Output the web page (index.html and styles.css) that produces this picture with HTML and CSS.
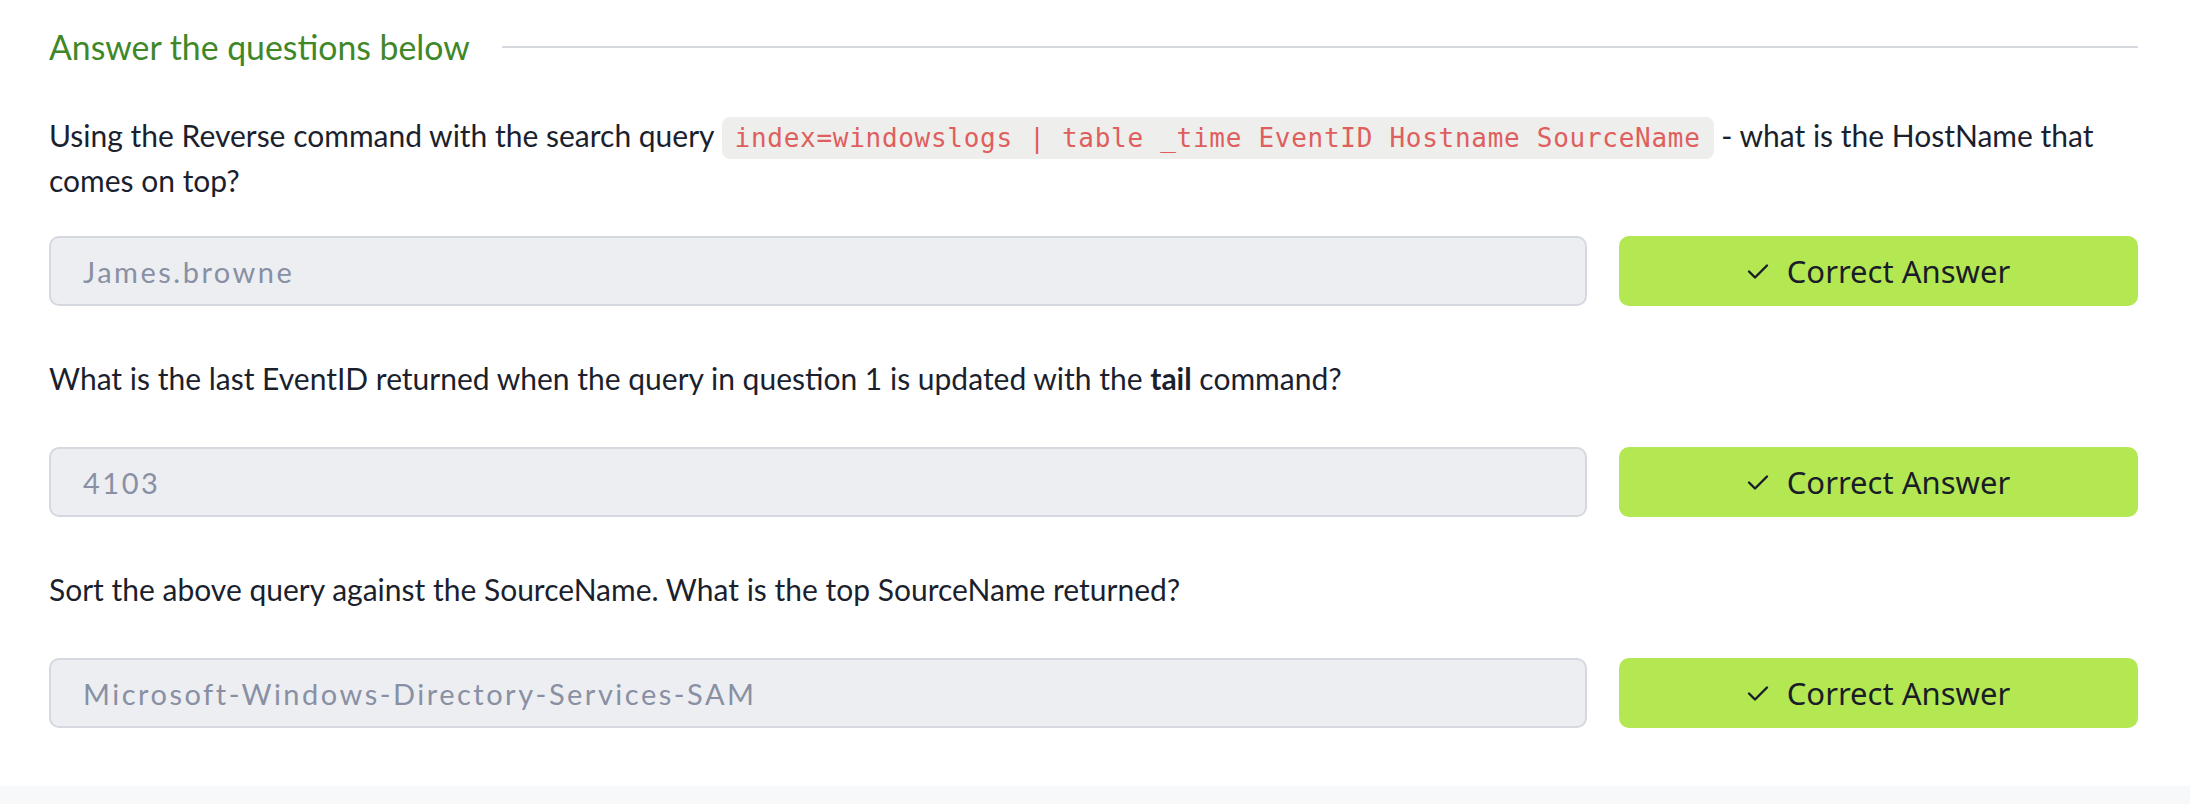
FILE: index.html
```html
<!DOCTYPE html>
<html lang="en">
<head>
<meta charset="utf-8">
<title>Answer the questions below</title>
<link rel="stylesheet" href="styles.css">
</head>
<body>
<div class="task">
  <div class="heading">
    <h3 class="heading-title">Answer the questions below</h3>
    <div class="heading-rule"></div>
  </div>

  <div class="question">
    <p class="q-text q-first">Using the Reverse command with the search query <code class="code">index=windowslogs | table _time EventID Hostname SourceName</code> - what is the HostName that comes on top?</p>
    <div class="answer-row">
      <div class="answer">James.browne</div>
      <button class="btn"><svg class="check" width="22" height="18" viewBox="0 0 22 18"><polyline points="2,9.5 8,15.5 20,3.5" fill="none" stroke="#1a1d27" stroke-width="2.4" stroke-linecap="round" stroke-linejoin="round"/></svg><span>Correct Answer</span></button>
    </div>
  </div>

  <div class="question">
    <p class="q-text">What is the last EventID returned when the query in question 1 is updated with the <strong>tail</strong> command?</p>
    <div class="answer-row">
      <div class="answer">4103</div>
      <button class="btn"><svg class="check" width="22" height="18" viewBox="0 0 22 18"><polyline points="2,9.5 8,15.5 20,3.5" fill="none" stroke="#1a1d27" stroke-width="2.4" stroke-linecap="round" stroke-linejoin="round"/></svg><span>Correct Answer</span></button>
    </div>
  </div>

  <div class="question">
    <p class="q-text">Sort the above query against the SourceName. What is the top SourceName returned?</p>
    <div class="answer-row">
      <div class="answer">Microsoft-Windows-Directory-Services-SAM</div>
      <button class="btn"><svg class="check" width="22" height="18" viewBox="0 0 22 18"><polyline points="2,9.5 8,15.5 20,3.5" fill="none" stroke="#1a1d27" stroke-width="2.4" stroke-linecap="round" stroke-linejoin="round"/></svg><span>Correct Answer</span></button>
    </div>
  </div>
</div>
<div class="band"></div>
</body>
</html>
```

FILE: styles.css
```css
html, body {
  margin: 0;
  padding: 0;
  background: #ffffff;
}

body {
  font-family: Lato, "Noto Sans", sans-serif;
  color: #1b1f2e;
}

.task {
  box-sizing: border-box;
  height: 786px;
  padding: 24px 52px 0 49px;
}

.heading {
  display: flex;
  align-items: center;
  gap: 32px;
  height: 46px;
}

.heading-title {
  margin: 0;
  font-family: Lato, sans-serif;
  font-weight: 400;
  font-size: 33.8px;
  line-height: 46px;
  color: #40872a;
  white-space: nowrap;
}

.heading-rule {
  flex: 1;
  height: 2px;
  background: #d5d8dd;
}

.question + .question {
  margin-top: 50px;
}

.q-text {
  margin: 0 0 46px;
  font-size: 30px;
  line-height: 45px;
}

.q-first {
  margin-top: 43px;
  margin-bottom: 33px;
}

.q-text strong {
  font-weight: 700;
}

.code {
  font-family: "DejaVu Sans Mono", monospace;
  font-size: 26px;
  line-height: 1;
  letter-spacing: 0.72px;
  color: #df5e5e;
  background: #eeeeec;
  padding: 6px 13px;
  border-radius: 8px;
}

.answer-row {
  display: flex;
  gap: 32px;
  height: 70px;
}

.answer {
  flex: 1;
  box-sizing: border-box;
  display: flex;
  align-items: center;
  padding: 0 32px;
  background: #eceef2;
  border: 2px solid #d5d8de;
  border-radius: 10px;
  font-family: Lato, sans-serif;
  font-size: 29px;
  letter-spacing: 2.5px;
  color: #8990a3;
}

.btn {
  width: 519px;
  flex: none;
  display: flex;
  align-items: center;
  justify-content: center;
  gap: 18px;
  border: none;
  border-radius: 10px;
  background: #b3e853;
  color: #1a1d27;
  font-family: "Noto Sans", sans-serif;
  font-size: 31px;
  padding: 0;
}

.check {
  display: block;
}

.band {
  height: 18px;
  background: #f7f8fa;
}
```
